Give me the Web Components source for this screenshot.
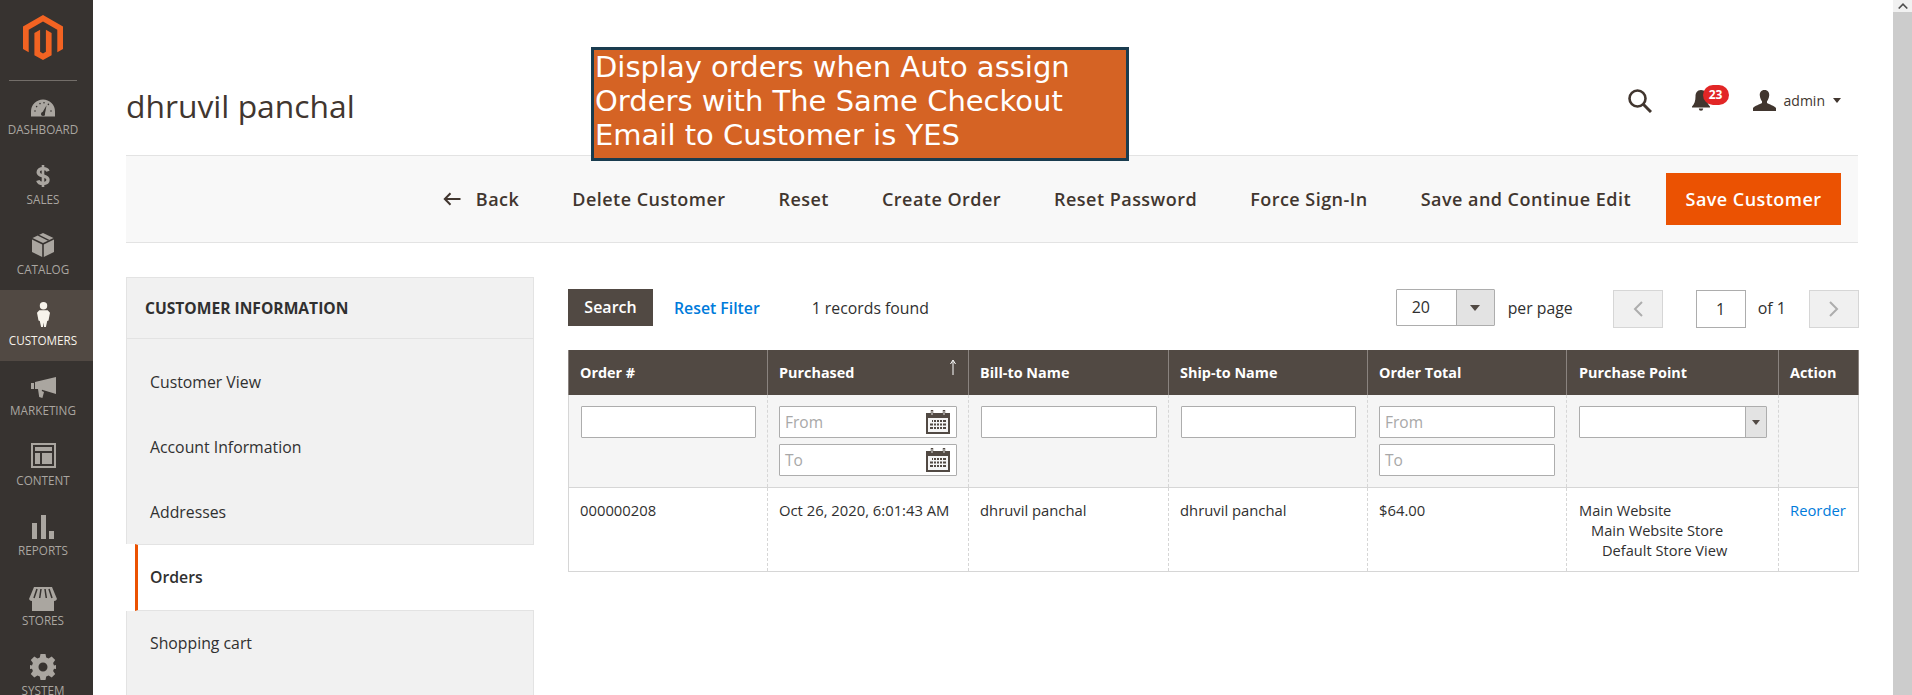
<!DOCTYPE html>
<html lang="en">
<head>
<meta charset="utf-8">
<title>dhruvil panchal / Customers</title>
<style>
  html, body { margin: 0; height: 100%; overflow: hidden; }
  body { font-family: "Open Sans", "Noto Sans", sans-serif; color: #303030; background: #fff; display: flex; }
</style>
</head>
<body>
<admin-sidebar>
  <nav-item icon="dashboard">DASHBOARD</nav-item>
  <nav-item icon="sales" nudge="-2">SALES</nav-item>
  <nav-item icon="catalog" nudge="-3">CATALOG</nav-item>
  <nav-item icon="customers" nudge="-4" active>CUSTOMERS</nav-item>
  <nav-item icon="marketing" nudge="-1">MARKETING</nav-item>
  <nav-item icon="content" nudge="-3">CONTENT</nav-item>
  <nav-item icon="reports" nudge="-2">REPORTS</nav-item>
  <nav-item icon="stores">STORES</nav-item>
  <nav-item icon="system" nudge="-2">SYSTEM</nav-item>
</admin-sidebar>
<page-main>
  <page-header title="dhruvil panchal"></page-header>
  <action-bar>
    <tool-btn back>Back</tool-btn>
    <tool-btn>Delete Customer</tool-btn>
    <tool-btn>Reset</tool-btn>
    <tool-btn>Create Order</tool-btn>
    <tool-btn>Reset Password</tool-btn>
    <tool-btn>Force Sign-In</tool-btn>
    <tool-btn>Save and Continue Edit</tool-btn>
    <tool-btn primary>Save Customer</tool-btn>
  </action-bar>
  <content-row>
    <customer-tabs>
      <tab-item>Customer View</tab-item>
      <tab-item>Account Information</tab-item>
      <tab-item short>Addresses</tab-item>
      <tab-item active>Orders</tab-item>
      <tab-item last>Shopping cart</tab-item>
    </customer-tabs>
    <orders-grid></orders-grid>
  </content-row>
  <note-box>Display orders when Auto assign Orders with The Same Checkout Email to Customer is YES</note-box>
</page-main>
<scroll-track></scroll-track>

<script>
// sidebar icons, drawn in their own little boxes
const navIcons = {
  dashboard: `<svg width="26" height="19" viewBox="0 0 26 19"><path d="M1 18.5V13.5A12 12 0 0 1 25 13.5V18.5Z" fill="currentColor"/><path d="M11.2 16.5 16.6 7.2 14.6 17.4Z" fill="#373330"/><circle cx="13" cy="16" r="2" fill="#373330"/><g fill="#373330"><circle cx="5" cy="13" r=".8"/><circle cx="6.6" cy="8.6" r=".8"/><circle cx="10" cy="5.6" r=".8"/><circle cx="14" cy="4.8" r=".8"/><circle cx="18.4" cy="6.4" r=".8"/><circle cx="21" cy="13" r=".8"/></g></svg>`,
  sales: `<svg width="14" height="24" viewBox="0 0 14 24"><path d="M12 7.2C11.4 5.4 9.4 4.6 7 4.6 4.200 4.600 2.200 6 2.200 8.200 2.200 13.400 12 10.400 12 15.800 12 18.200 9.800 19.500 7 19.500 4.400 19.500 2.400 18.500 1.800 16.500" fill="none" stroke="currentColor" stroke-width="3.400"/><path d="M7 1V23" stroke="currentColor" stroke-width="2.600"/></svg>`,
  catalog: `<svg width="22" height="24" viewBox="0 0 22 24"><path d="M11 0 21.500 5 11 10 .5 5Z" fill="currentColor"/><path d="M5.500 2.600 16 7.700 17.600 6.900 7.100 1.800Z" fill="#373330"/><path d="M0 6.500 10.200 11.400V24L0 19Z" fill="currentColor"/><path d="M22 6.500 11.800 11.400V24L22 19Z" fill="currentColor"/></svg>`,
  customers: `<svg width="13" height="28" viewBox="0 0 14 28"><circle cx="7" cy="4" r="4" fill="currentColor"/><path d="M2.500 9H11.500L14 11.500 12.400 20 11 20.500 9.600 27H7.600L7 22 6.400 27H4.400L3 20.500 1.600 20 0 11.500Z" fill="currentColor"/></svg>`,
  marketing: `<svg width="25" height="21" viewBox="0 0 25 21"><path d="M0 6H3V12H0Z" fill="currentColor"/><path d="M4 5 25 0V17L11 12.800 10.800 14 13 15 11.400 21 8.200 20 7 12H4Z" fill="currentColor"/></svg>`,
  content: `<svg width="25" height="25" viewBox="0 0 25 25"><path d="M0 0H25V25H0ZM2 2V23H23V2Z" fill="currentColor" fill-rule="evenodd"/><path d="M4 4H21V8H4ZM4 10H9V21H4ZM11 10H21V21H11Z" fill="currentColor"/></svg>`,
  reports: `<svg width="22" height="24" viewBox="0 0 22 24"><path d="M0 8H5V24H0ZM9 0H14V24H9ZM17 16H22V24H17Z" fill="currentColor"/></svg>`,
  stores: `<svg width="28" height="24" viewBox="0 0 28 24"><path d="M5 0H23L28 12A3 3 0 0 1 25 14V24H3V14A3 3 0 0 1 0 12Z" fill="currentColor"/><g stroke="#373330" stroke-width="1.500"><path d="M8 2 5 11M12 2 10.700 11M16 2 17.300 11M20 2 23 11"/></g></svg>`,
  system: `<svg width="26" height="26" viewBox="0 0 26 26"><path d="M10.500 0H15.500L16.200 3.600 18.600 4.600 21.700 2.500 25.200 6 23.100 9.100 24 11.400 26 11V15L24 14.700 23.100 17 25.200 20.100 21.700 23.500 18.600 21.500 16.200 22.400 15.500 26H10.500L9.800 22.400 7.400 21.500 4.300 23.500 .8 20.100 2.900 17 2 14.700 0 15V11L2 11.400 2.900 9.100 .8 6 4.300 2.500 7.400 4.600 9.800 3.600ZM13 8.500A4.500 4.500 0 1 0 13 17.500 4.500 4.500 0 1 0 13 8.500Z" fill="currentColor" fill-rule="evenodd"/></svg>`
};

class AdminSidebar extends HTMLElement {
  constructor() {
    super();
    this.attachShadow({ mode: 'open' }).innerHTML = `
      <style>
        :host { display: block; flex: 0 0 93px; height: 695px; background: #373330; overflow: hidden; }
        .logo { height: 80px; box-sizing: border-box; padding: 15px 0 0 23px; position: relative; }
        .logo::after { content: ''; display: block; margin: 0 0 0 -14px; width: 68px; height: 1px; background: #736e69; position: absolute; top: 80px; }
        svg { display: block; }
      </style>
      <div class="logo">
        <svg width="40" height="45" viewBox="0 0 40 45"><path d="M20 0 40 11.500V34L34.300 37.300V14.800L20 6.500 5.700 14.800V37.300L0 34V11.500Z" fill="#f26322"/><path d="M11.400 18 17.100 14.700V36.800L20 38.500 22.900 36.800V14.700L28.600 18V40.300L20 45 11.400 40.300Z" fill="#f26322"/></svg>
      </div>
      <slot></slot>`;
  }
}
customElements.define('admin-sidebar', AdminSidebar);

class NavItem extends HTMLElement {
  connectedCallback() {
    if (this.shadowRoot) return;
    const root = this.attachShadow({ mode: 'open' });
    // nudge lifts the icon a little, the label stays on its line
    const n = Number(this.getAttribute('nudge') || 0);
    root.innerHTML = `
      <style>
        :host { display: block; height: 70px; box-sizing: border-box; padding: 12px 7px 0 0; color: #aaa6a0; text-align: center; font-size: 11.700px; line-height: 12px; }
        :host([active]) { background: #514943; color: #f7f3eb; height: 71px; padding-top: 13px; }
        .icon { height: 31px; display: flex; align-items: center; justify-content: center; margin: ${n}px 0 ${-n}px; }
      </style>
      <div class="icon">${navIcons[this.getAttribute('icon')] || ''}</div>
      <slot></slot>`;
  }
}
customElements.define('nav-item', NavItem);

class PageMain extends HTMLElement {
  constructor() {
    super();
    this.attachShadow({ mode: 'open' }).innerHTML = `
      <style>
        :host { display: block; flex: 1; min-width: 0; box-sizing: border-box; padding: 0 35px 0 33px; position: relative; overflow: hidden; height: 695px; }
      </style>
      <slot></slot>`;
  }
}
customElements.define('page-main', PageMain);

class PageHeader extends HTMLElement {
  connectedCallback() {
    if (this.shadowRoot) return;
    this.attachShadow({ mode: 'open' }).innerHTML = `
      <style>
        :host { display: flex; height: 155px; align-items: flex-start; justify-content: space-between; padding-right: 17px; color: #41362f; }
        h1 { margin: 85px 0 0; font-size: 31.800px; font-weight: 400; line-height: 42px; color: #41362f; }
        .tools { display: flex; align-items: center; margin-top: 87px; height: 26px; font-size: 14px; }
        svg { display: block; }
        .search { margin-top: 2px; }
        .bell { position: relative; margin: 0 43px 0 40px; }
        .badge { position: absolute; left: 11px; top: -5px; width: 26px; height: 20px; border-radius: 10px; background: #e22626; color: #fff; font-size: 12px; font-weight: 700; line-height: 19px; text-align: center; }
        .name { margin: 0 8px 0 8px; }
        .caret { width: 0; height: 0; border: 4px solid transparent; border-top: 5px solid #41362f; border-bottom: 0; }
      </style>
      <h1>${this.getAttribute('title')}</h1>
      <div class="tools">
        <svg class="search" width="24" height="24" viewBox="0 0 24 24"><circle cx="9.500" cy="9.500" r="8" fill="none" stroke="#41362f" stroke-width="2.600"/><path d="M15 15 23 23" stroke="#41362f" stroke-width="3"/></svg>
        <div class="bell">
          <svg width="18" height="21" viewBox="0 0 18 21"><path d="M9 0C5 0 3.500 3 3.500 6.500 3.500 11 2.500 14 0 16.500V17.500H18V16.500C15.500 14 14.500 11 14.500 6.500 14.500 3 13 0 9 0Z" fill="#41362f"/><path d="M6.800 18.500H11.200A2.200 2.200 0 0 1 6.800 18.500Z" fill="#41362f"/></svg>
          <span class="badge">23</span>
        </div>
        <svg width="23" height="21" viewBox="0 0 23 21"><path d="M11.500 0C8 0 6.500 2.500 6.800 5.500 7 8 8 10 9 11.200V13C7 14.500 1.500 15.500 0 18V21H23V18C21.500 15.500 16 14.500 14 13V11.200C15 10 16 8 16.200 5.500 16.500 2.500 15 0 11.500 0Z" fill="#41362f"/></svg>
        <span class="name">admin</span>
        <span class="caret"></span>
      </div>`;
  }
}
customElements.define('page-header', PageHeader);

class ActionBar extends HTMLElement {
  constructor() {
    super();
    this.attachShadow({ mode: 'open' }).innerHTML = `
      <style>
        :host { display: flex; height: 88px; box-sizing: border-box; align-items: center; justify-content: flex-end; gap: 53px; padding-right: 17px; background: #f8f8f8; border-top: 1px solid #e3e3e3; border-bottom: 1px solid #e3e3e3; }
      </style>
      <slot></slot>`;
  }
}
customElements.define('action-bar', ActionBar);

class ToolBtn extends HTMLElement {
  connectedCallback() {
    if (this.shadowRoot) return;
    const back = this.hasAttribute('back');
    this.attachShadow({ mode: 'open' }).innerHTML = `
      <style>
        :host { display: flex; align-items: center; gap: 15px; font-size: 18px; font-weight: 600; letter-spacing: .47px; color: #41362f; white-space: nowrap; }
        :host([primary]) { box-sizing: border-box; height: 52px; width: 175px; justify-content: center; margin-left: -18px; background: #eb5202; color: #fff; letter-spacing: .45px; }
        svg { display: block; }
      </style>
      ${back ? '<svg width="18" height="14" viewBox="0 0 18 14"><path d="M7.500 1.200 1.800 7 7.500 12.800M2 7H17.500" fill="none" stroke="#41362f" stroke-width="2"/></svg>' : ''}
      <slot></slot>`;
  }
}
customElements.define('tool-btn', ToolBtn);

class ContentRow extends HTMLElement {
  constructor() {
    super();
    this.attachShadow({ mode: 'open' }).innerHTML = `
      <style>
        :host { display: flex; gap: 34px; margin-top: 34px; align-items: flex-start; }
      </style>
      <slot></slot>`;
  }
}
customElements.define('content-row', ContentRow);

class CustomerTabs extends HTMLElement {
  constructor() {
    super();
    this.attachShadow({ mode: 'open' }).innerHTML = `
      <style>
        :host { display: block; flex: 0 0 408px; }
        .title { height: 62px; box-sizing: border-box; padding-left: 18px; background: #f1f1f1; border: 1px solid #e3e3e3; font-size: 15.600px; font-weight: 700; line-height: 60px; color: #303030; }
        .gap { height: 11px; background: #f1f1f1; border: solid #e3e3e3; border-width: 0 1px; }
      </style>
      <div class="title">CUSTOMER INFORMATION</div>
      <div class="gap"></div>
      <slot></slot>`;
  }
}
customElements.define('customer-tabs', CustomerTabs);

class TabItem extends HTMLElement {
  constructor() {
    super();
    this.attachShadow({ mode: 'open' }).innerHTML = `
      <style>
        :host { display: block; height: 65px; box-sizing: border-box; padding-left: 23px; background: #f1f1f1; border: solid #e3e3e3; border-width: 0 1px; font-size: 15.800px; line-height: 65px; color: #303030; }
        :host([short]) { height: 64px; }
        :host([active]) { height: 67px; margin-left: 9px; padding-left: 12px; background: #fff; border: 0; border-left: 3px solid #eb5202; font-weight: 600; line-height: 65px; border-top: 1px solid #e3e3e3; border-bottom: 1px solid #e3e3e3; }
        :host([last]) { height: 120px; }
      </style>
      <slot></slot>`;
  }
}
customElements.define('tab-item', TabItem);

class OrdersGrid extends HTMLElement {
  constructor() {
    super();
    const cal = `<svg class="cal" width="24" height="24" viewBox="0 0 24 24"><path d="M0 3H24V24H0Z" fill="#514943"/><path d="M2 8H22V22H2Z" fill="#f5f5f5"/><path d="M6 0V6M18 0V6" stroke="#514943" stroke-width="2.400"/><path d="M6 1V5M18 1V5" stroke="#f5f5f5" stroke-width=".9"/><g fill="#514943"><path d="M6 10H20V12H6ZM4 13.500H20V15.500H4ZM4 17H20V19H4Z"/></g><g stroke="#f5f5f5" stroke-width="1"><path d="M7.500 10V19M10.500 10V19M13.500 10V19M16.500 10V19"/></g></svg>`;
    this.attachShadow({ mode: 'open' }).innerHTML = `
      <style>
        :host { display: block; flex: 0 0 1290px; font-size: 15.800px; color: #303030; }
        * { box-sizing: border-box; }
        .toolbar { display: flex; align-items: center; height: 37px; margin: 12px 0 24px; }
        .search { width: 85px; height: 37px; background: #514943; color: #fff; font-weight: 600; font-size: 16px; line-height: 37px; text-align: center; }
        .reset { margin-left: 21px; color: #007bdb; font-weight: 600; }
        .found { margin-left: 52px; }
        .pager { margin-left: auto; display: flex; align-items: center; }
        .select { display: flex; width: 99px; height: 37px; background: #fff; border: 1px solid #adadad; border-radius: 1px; font-size: 16px; }
        .select b { flex: 1; font-weight: 400; padding-left: 15px; line-height: 35px; }
        .select i { width: 38px; background: #e3e3e3; border-left: 1px solid #adadad; display: flex; align-items: center; justify-content: center; }
        .arrow { width: 0; height: 0; border: 5px solid transparent; border-top: 6px solid #514943; border-bottom: 0; }
        .perpage { margin: 0 40px 0 13px; font-size: 15.800px; }
        .nav { width: 50px; height: 38px; margin-top: 2px; background: #f0f0f0; border: 1px solid #d6d6d6; display: flex; align-items: center; justify-content: center; }
        .page { width: 50px; height: 38px; margin: 2px 12px 0 33px; background: #fff; border: 1px solid #adadad; text-align: center; line-height: 36px; font-size: 16px; }
        .of { margin-right: 23px; font-size: 16px; }
        table { width: 1290px; border-collapse: collapse; table-layout: fixed; font-size: 14.800px; }
        th { height: 45px; background: #514943; color: #fff; font-weight: 700; font-size: 14.400px; text-align: left; padding: 0 11px; border: 1px solid #8a837f; border-width: 0 1px; position: relative; white-space: nowrap; }
        th:nth-child(6) { padding-left: 12px; }
        .sort { position: absolute; right: 11px; top: 9px; }
        .filters td { height: 92px; background: #f5f5f5; vertical-align: top; padding: 11px 11px 0; border-left: 1px dashed #d6d6d6; border-right: 1px dashed #d6d6d6; border-bottom: 1px solid #d6d6d6; }
        .filters td.inset { padding-left: 12px; }
        .filters td:first-child, .row td:first-child { border-left: 1px solid #d6d6d6; }
        .filters td:last-child, .row td:last-child { border-right: 1px solid #d6d6d6; }
        .field { position: relative; height: 32px; background: #fff; border: 1px solid #adadad; border-radius: 1px; padding-left: 5px; line-height: 31px; color: #a8a8a8; font-size: 15.500px; margin-bottom: 6px; }
        .cal { position: absolute; right: 6px; top: 3px; }
        .drop { position: relative; height: 32px; background: #fff; border: 1px solid #adadad; border-radius: 1px; }
        .drop i { position: absolute; right: 0; top: 0; bottom: 0; width: 21px; background: #e3e3e3; border-left: 1px solid #adadad; display: flex; align-items: center; justify-content: center; }
        .drop .arrow { border-width: 4px; border-top-width: 5px; border-bottom: 0; }
        .row td { height: 84px; vertical-align: top; padding: 12px 11px 0; line-height: 20px; border-left: 1px dashed #d6d6d6; border-right: 1px dashed #d6d6d6; border-bottom: 1px solid #d6d6d6; white-space: nowrap; }
        .row td.point { padding-left: 12px; font-size: 14.600px; }
        .point div:nth-child(2) { padding-left: 12px; }
        .point div:nth-child(3) { padding-left: 23px; }
        a { color: #007bdb; text-decoration: none; }
      </style>
      <div class="toolbar">
        <div class="search">Search</div>
        <a class="reset">Reset Filter</a>
        <span class="found">1 records found</span>
        <div class="pager">
          <div class="select"><b>20</b><i><span class="arrow"></span></i></div>
          <span class="perpage">per page</span>
          <div class="nav"><svg width="12" height="18" viewBox="0 0 12 18"><path d="M10 2 3 9 10 16" fill="none" stroke="#adadad" stroke-width="2"/></svg></div>
          <div class="page">1</div>
          <span class="of">of 1</span>
          <div class="nav"><svg width="12" height="18" viewBox="0 0 12 18"><path d="M2 2 9 9 2 16" fill="none" stroke="#adadad" stroke-width="2"/></svg></div>
        </div>
      </div>
      <table>
        <colgroup><col style="width:199px"><col style="width:201px"><col style="width:200px"><col style="width:199px"><col style="width:199px"><col style="width:212px"><col style="width:80px"></colgroup>
        <thead><tr>
          <th>Order #</th>
          <th>Purchased<svg class="sort" width="8" height="16" viewBox="0 0 8 16"><path d="M4 16V2M1.500 5 4 1 6.500 5" fill="none" stroke="#fff" stroke-width="1"/></svg></th>
          <th>Bill-to Name</th><th>Ship-to Name</th><th>Order Total</th><th>Purchase Point</th><th>Action</th>
        </tr></thead>
        <tbody>
          <tr class="filters">
            <td class="inset"><div class="field"></div></td>
            <td><div class="field">From${cal}</div><div class="field">To${cal}</div></td>
            <td class="inset"><div class="field"></div></td>
            <td class="inset"><div class="field"></div></td>
            <td><div class="field">From</div><div class="field">To</div></td>
            <td class="inset"><div class="drop"><i><span class="arrow"></span></i></div></td>
            <td></td>
          </tr>
          <tr class="row">
            <td>000000208</td><td>Oct 26, 2020, 6:01:43 AM</td><td>dhruvil panchal</td><td>dhruvil panchal</td><td>$64.00</td>
            <td class="point"><div>Main Website</div><div>Main Website Store</div><div>Default Store View</div></td>
            <td><a>Reorder</a></td>
          </tr>
        </tbody>
      </table>`;
  }
}
customElements.define('orders-grid', OrdersGrid);

class NoteBox extends HTMLElement {
  constructor() {
    super();
    this.attachShadow({ mode: 'open' }).innerHTML = `
      <style>
        :host { position: absolute; left: 498px; top: 47px; width: 538px; height: 114px; box-sizing: border-box; padding: 0 1px; background: #d56324; border: 3px solid #1a3c4f; color: #fff; font-family: "DejaVu Sans", sans-serif; font-size: 29px; overflow: hidden; }
      </style>
      <slot></slot>`;
  }
}
customElements.define('note-box', NoteBox);

class ScrollTrack extends HTMLElement {
  constructor() {
    super();
    this.attachShadow({ mode: 'open' }).innerHTML = `
      <style>
        :host { display: block; flex: 0 0 19px; height: 695px; background: #ccc; }
        .up { height: 12px; background: #f1f1f1; display: flex; align-items: center; justify-content: center; }
        svg { display: block; }
      </style>
      <div class="up"><svg width="10" height="6" viewBox="0 0 10 6"><path d="M.7 5.500 5 1.200 9.300 5.500" fill="none" stroke="#505050" stroke-width="1.600"/></svg></div>`;
  }
}
customElements.define('scroll-track', ScrollTrack);
</script>
</body>
</html>
